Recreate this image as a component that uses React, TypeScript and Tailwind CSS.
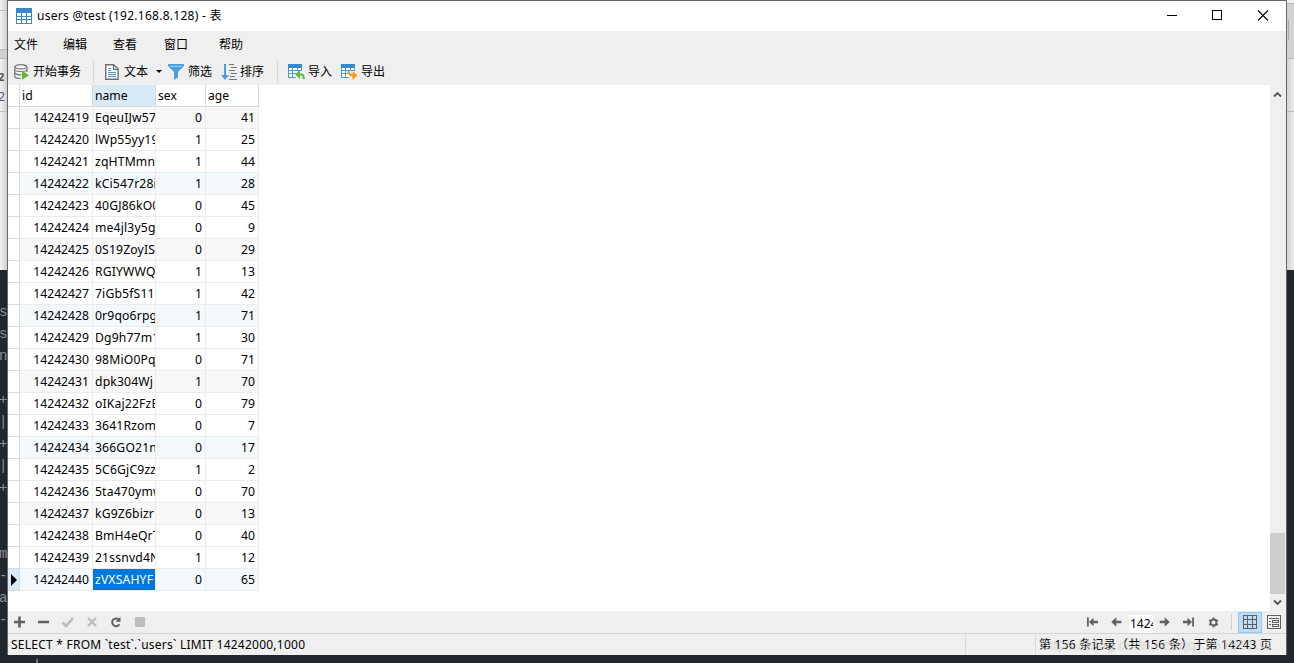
import { useState } from 'react';
import type { ReactNode } from 'react';
import clsx from 'clsx';

interface UserRow {
  id: number;
  name: string;
  sex: number;
  age: number;
}

const FIRST_ID = 14242419;

const records: [string, number, number][] = [
  ['EqeuIJw57', 0, 41],
  ['lWp55yy19', 1, 25],
  ['zqHTMmn', 1, 44],
  ['kCi547r28i', 1, 28],
  ['40GJ86kO0', 0, 45],
  ['me4jl3y5gT', 0, 9],
  ['0S19ZoyIS', 0, 29],
  ['RGIYWWQ', 1, 13],
  ['7iGb5fS11e', 1, 42],
  ['0r9qo6rpg', 1, 71],
  ['Dg9h77m1', 1, 30],
  ['98MiO0Pq', 0, 71],
  ['dpk304Wj', 1, 70],
  ['oIKaj22FzE', 0, 79],
  ['3641Rzom', 0, 7],
  ['366GO21n', 0, 17],
  ['5C6GjC9zz', 1, 2],
  ['5ta470ymw', 0, 70],
  ['kG9Z6bizr', 0, 13],
  ['BmH4eQrT', 0, 40],
  ['21ssnvd4N', 1, 12],
  ['zVXSAHYF', 0, 65],
];

const rows: UserRow[] = records.map(([name, sex, age], i) => ({ id: FIRST_ID + i, name, sex, age }));

const menus = ['文件', '编辑', '查看', '窗口', '帮助'];

// Terminal window showing from behind, one entry per line
const terminalLines = ['s', 's', 'n', '', '+', '|', '+', '|', '+', '', '', 'm', '-', 'a', '-'];

function TableIcon({ children }: { children?: ReactNode }) {
  return (
    <svg width="16" height="16" viewBox="0 0 16 16" shapeRendering="crispEdges">
      <rect x="0" y="0" width="16" height="16" fill="#3b88c6" />
      <path d="M1 5h4v3H1zM6 5h4v3H6zM11 5h4v3h-4zM1 9h4v2H1zM6 9h4v2H6zM11 9h4v2h-4zM1 12h4v3H1zM6 12h4v3H6zM11 12h4v3h-4z" fill="#fff" />
      {children}
    </svg>
  );
}

function TransferIcon({ type }: { type: 'import' | 'export' }) {
  return (
    <svg width="17" height="16" viewBox="0 0 17 16">
      <g shapeRendering="crispEdges">
        <path d="M0 0h14v4H0z" fill="#3b88c6" />
        <path d="M0 4h14v3H8v7H0z" fill="#4d9bd6" />
        <path d="M1 4h3v2H1zM5 4h4v2H5zM10 4h3v2h-3zM1 7h3v2H1zM5 7h4v2H5zM1 10h3v3H1zM5 10h3v3H5z" fill="#fff" />
      </g>
      {type === 'import' ? (
        <>
          <path d="M7 10.5l5-4.5v9z" fill="#62bb35" />
          <path d="M11 10.5h2.5q2.2 0 2.2 4.5" fill="none" stroke="#62bb35" strokeWidth="2.2" />
        </>
      ) : (
        <>
          <path d="M16.5 11.5l-5-4.5v9z" fill="#f79a1c" />
          <path d="M7.5 7q0 4.5 5 4.5" fill="none" stroke="#f79a1c" strokeWidth="2.2" />
        </>
      )}
    </svg>
  );
}

function TransactionIcon() {
  return (
    <svg width="16" height="16" viewBox="0 0 16 16" fill="none">
      <path d="M.8 3v9.5c0 1.2 2.5 2 6 2" stroke="#777" strokeWidth="1.2" />
      <path d="M12.9 3v5" stroke="#777" strokeWidth="1.2" />
      <ellipse cx="6.8" cy="2.8" rx="6" ry="2.1" fill="#f8f8f8" stroke="#777" strokeWidth="1.2" />
      <path d="M.8 6c1.5 2 10.5 2 12.1 0M.8 9.2c1.2 1.5 4 1.8 6.5 1.6" stroke="#777" strokeWidth="1.2" />
      <path d="M8 6.5l7 4.7-7 4.6z" fill="#62bb35" />
    </svg>
  );
}

function TextIcon() {
  return (
    <svg width="14" height="16" viewBox="0 0 14 16" fill="none">
      <path d="M.7.7h8l4.4 4.4v10.2H.7z" fill="#fbfbfb" stroke="#707070" strokeWidth="1.4" />
      <path d="M8.5.7v4.7h4.6" stroke="#707070" strokeWidth="1.2" />
      <path d="M3 4.500h3M3 6.500h3M3 8.500h8M3 10.500h8M3 12.500h8" stroke="#4d9bd6" shapeRendering="crispEdges" />
    </svg>
  );
}

function FilterIcon() {
  return (
    <svg width="16" height="16" viewBox="0 0 16 16">
      <path d="M0 0h16v2l-6 6v5.5L6 16V8L0 2z" fill="#4a9fe0" />
      <path d="M2 2.3h12" stroke="#9fd0f5" strokeWidth="1" />
    </svg>
  );
}

function SortIcon() {
  return (
    <svg width="17" height="16" viewBox="0 0 17 16">
      <path d="M3 0h2v11h3l-4 5-4-5h3z" fill="#4a9fe0" />
      <path d="M8 .5h5M10 3.500h6M8 6.500h6M10 9.500h6M9 12.500h5M8 15.500h8" stroke="#777" shapeRendering="crispEdges" />
    </svg>
  );
}

function ArrowIcon({ flip, bar }: { flip?: boolean; bar?: boolean }) {
  return (
    <svg width="11" height="10" viewBox="0 0 11 10" className={flip ? '-scale-x-100' : undefined}>
      {bar ? (
        <path d="M0 .5h1.800v9H0zM2 5l4.500-4.300v3H11v2.600H6.500v3z" fill="#606060" />
      ) : (
        <path d="M.3 5L5.300.3v3.400H10.300v2.600h-5v3.400z" fill="#606060" />
      )}
    </svg>
  );
}

function Chevron({ down }: { down?: boolean }) {
  return (
    <svg width="9" height="7" viewBox="0 0 9 7" className={down ? 'rotate-180' : undefined}>
      <path d="M1 5.5L4.5 2 8 5.5" fill="none" stroke="#555" strokeWidth="1.9" />
    </svg>
  );
}

function TitleBar() {
  return (
    <div className="flex h-[31px] shrink-0 items-center border-t border-[#666] bg-white pl-2">
      <TableIcon />
      <span className="ml-[5px] text-[12px] tracking-[0.27px]">users @test (192.168.8.128) - 表</span>
      <svg className="ml-auto" width="120" height="30" viewBox="0 0 120 30" fill="none" stroke="#000">
        <path d="M1 14.5h10M46.500 9.500h9v9h-9z" shapeRendering="crispEdges" />
        <path d="M92 9.500l10 10M102 9.500l-10 10" strokeWidth="1.100" />
      </svg>
    </div>
  );
}

function Toolbar() {
  return (
    <div className="flex h-[27px] shrink-0 items-center pl-[6px] text-[12px] leading-4">
      <TransactionIcon />
      <span className="ml-[3px] w-[49px]">开始事务</span>
      <i className="ml-[11px] h-[23px] w-px bg-[#d8d8d8]" />
      <span className="ml-[11px]"><TextIcon /></span>
      <span className="ml-[5px] w-[24px]">文本</span>
      <i className="ml-[8px] border-x-[3px] border-t-[3px] border-x-transparent border-t-black" />
      <span className="ml-[6px]"><FilterIcon /></span>
      <span className="ml-[4px] w-[24px]">筛选</span>
      <span className="ml-[9px]"><SortIcon /></span>
      <span className="ml-[2px] w-[24px]">排序</span>
      <i className="ml-[13px] h-[23px] w-px bg-[#d8d8d8]" />
      <span className="ml-[10px]"><TransferIcon type="import" /></span>
      <span className="ml-[3px] w-[24px]">导入</span>
      <span className="ml-[9px]"><TransferIcon type="export" /></span>
      <span className="ml-[3px]">导出</span>
    </div>
  );
}

function DataGrid({ current, onSelect }: { current: number; onSelect: (i: number) => void }) {
  const cols = 'grid w-[251px] grid-cols-[12px_73px_63px_50px_53px] text-[12.2px] leading-[21px]';

  return (
    <div className="min-w-0 flex-1 bg-white">
      <div className={clsx(cols, 'h-[22px]')}>
        {['', 'id', 'name', 'sex', 'age'].map((col, i) => (
          <div
            key={i}
            className={clsx('border-r border-b border-[#dadada] pl-[2px]', col === 'name' && 'bg-[#d8e9f8]')}
          >
            {col}
          </div>
        ))}
      </div>
      {rows.map((row, i) => (
        <div
          key={row.id}
          onClick={() => onSelect(i)}
          className={clsx(cols, 'h-[22px]', i % 6 === 0 && 'bg-[#f8f8f8]', i % 6 === 3 && 'bg-[#f4f9fe]')}
        >
          <div
            className={clsx(
              'flex items-center border-r border-b border-[#dadada] pl-[3px]',
              i === current ? 'bg-[#d8e9f8]' : 'bg-white',
            )}
          >
            {i === current && (
              <i className="border-y-[6px] border-l-[6px] border-y-transparent border-l-black" />
            )}
          </div>
          <div className="border-r border-b border-[#ececec] pr-[3px] text-right">{row.id}</div>
          <div
            className={clsx(
              'overflow-hidden border-r border-b border-[#ececec] pl-[2px] tracking-[0.15px] whitespace-nowrap',
              i === current && 'bg-[#0078d7] bg-clip-padding text-white',
            )}
          >
            {row.name}
          </div>
          <div className="border-r border-b border-[#ececec] pr-[3px] text-right">{row.sex}</div>
          <div className="border-r border-b border-[#ececec] pr-[3px] text-right">{row.age}</div>
        </div>
      ))}
    </div>
  );
}

function ScrollBar() {
  return (
    <div className="flex w-[15px] shrink-0 flex-col items-center bg-[#efefef]">
      <div className="flex h-[18px] items-center"><Chevron /></div>
      <div className="mt-auto h-[61px] w-full bg-[#cdcdcd]" />
      <div className="flex h-[17px] items-center"><Chevron down /></div>
    </div>
  );
}

function NavBar() {
  return (
    <div className="flex h-[22px] shrink-0 items-center pr-[5px] pl-[6px]">
      <svg width="134" height="12" viewBox="0 0 134 12" fill="none">
        <path d="M0 6h11M5.500 .5v11M24 6h11" stroke="#606060" strokeWidth="2.600" />
        <path d="M48.500 6.500l3.500 3.500 7-8" stroke="#bdbdbd" strokeWidth="2.600" />
        <path d="M74 2l8 8M82 2l-8 8" stroke="#bdbdbd" strokeWidth="2.400" />
        <path d="M105 3.700a3.900 3.900 0 1 0 .5 4.500" stroke="#606060" strokeWidth="2" />
        <path d="M106.500 .8v5h-5z" fill="#606060" />
        <path d="M121 1h10v10h-10z" fill="#bdbdbd" />
      </svg>
      <div className="ml-auto flex items-center">
        <ArrowIcon bar />
        <span className="ml-[13px]"><ArrowIcon /></span>
        <div className="mt-[3px] ml-[7px] h-[18px] w-[24px] overflow-hidden bg-white pl-px text-[12px] leading-[18px]">14243</div>
        <span className="ml-[6px]"><ArrowIcon flip /></span>
        <span className="ml-[13px]"><ArrowIcon flip bar /></span>
        <svg className="ml-[14px]" width="11" height="11" viewBox="0 0 11 11" fill="none" stroke="#606060">
          <circle cx="5.500" cy="5.500" r="3" strokeWidth="1.900" />
          <path d="M5.500 0.500v2M5.500 8.500v2M1.200 3l1.600 1M8.200 7l1.600 1M1.200 8l1.600-1M8.200 4l1.600-1" strokeWidth="1.800" />
        </svg>
        <i className="ml-[12px] h-[16px] w-px bg-[#d0d0d0]" />
        <div className="ml-[6px] flex h-[21px] w-[24px] items-center justify-center border border-[#90c8f6] bg-[#c0dcf3]">
          <svg width="14" height="14" viewBox="0 0 14 14" fill="none" stroke="#606060" shapeRendering="crispEdges">
            <path d="M.5.5h13v13H.5zM4.500 0v14M9.500 0v14M0 4.500h14M0 9.500h14" />
          </svg>
        </div>
        <svg className="ml-[5px]" width="14" height="14" viewBox="0 0 14 14" fill="none" stroke="#606060" shapeRendering="crispEdges">
          <path d="M.5.5h13v13H.5zM2 3.500h10M2 6.500h2M2 9.500h2M5.500 5.500h6v2h-6zM5.500 9.500h6v2h-6z" />
        </svg>
      </div>
    </div>
  );
}

function StatusBar() {
  return (
    <div className="flex h-[22px] shrink-0 border-t border-[#d5d5d5] text-[12px] leading-[21px]">
      <div className="w-[958px] border-r border-[#dadada] pl-[3px] tracking-[0.24px]">
        SELECT * FROM `test`.`users` LIMIT 14242000,1000
      </div>
      <div className="w-[70px] border-r border-[#dadada]" />
      <div className="relative flex-1 pl-[3px] tracking-[0.25px] whitespace-nowrap">
        第 156 条记录（共 156 条）于第 14243 页
        <span className="absolute top-0 left-[5px] font-['Liberation_Sans'] text-[15px] tracking-normal text-white/50 [text-shadow:0_0_1px_#0003]">
          https://blog.csdn.net/qq_25188133
        </span>
      </div>
    </div>
  );
}

export default function App() {
  const [current, setCurrent] = useState(rows.length - 1);

  return (
    <div className="flex h-[663px] w-[1294px] flex-col overflow-hidden bg-[#22262e] font-['Noto_Sans','Noto_Sans_CJK_SC',sans-serif] text-black">
      <div className="flex h-[655px]">
        {/* Windows behind, left side */}
        <div className="flex w-[8px] shrink-0 flex-col overflow-hidden border-r border-[#666]">
          <div className="h-[270px] shrink-0 bg-linear-to-r from-[#f3f3f3] to-[#cfcfcf] text-[11px] text-[#555]">
            <div className="h-[11px] border-b border-[#b8b8b8]" />
            <div className="h-[39px] border-b border-[#b8b8b8]" />
            <div className="h-[9px] border-b border-[#b8b8b8] bg-[#d0d0d0]" />
            <div className="h-[53px] border-b border-[#c0c0c0] pt-[8px] leading-[20px]">
              <div className="-ml-[2px] font-bold">2</div>
              <div className="-ml-[2px] text-[12px] text-[#557]">2</div>
            </div>
          </div>
          <div className="flex-1 pt-[31px] font-['Liberation_Mono'] text-[14px] leading-[22px] text-[#8b8f97]">
            {terminalLines.map((line, i) => (
              <div key={i} className="-ml-px h-[22px]">{line}</div>
            ))}
          </div>
        </div>

        <div className="flex min-w-0 flex-1 flex-col bg-[#efefef]">
          <TitleBar />
          <div className="flex h-[27px] shrink-0 items-center pl-[6px] text-[12px]">
            {menus.map((menu, i) => (
              <span key={menu} className={clsx('h-[18px] leading-[18px]', i === 3 ? 'w-[55px]' : i === 2 ? 'w-[51px]' : i === 1 ? 'w-[50px]' : 'w-[49px]')}>
                {menu}
              </span>
            ))}
          </div>
          <Toolbar />
          <div className="flex h-[526px] shrink-0 pr-px">
            <DataGrid current={current} onSelect={setCurrent} />
            <ScrollBar />
          </div>
          <NavBar />
          <StatusBar />
        </div>

        {/* Right side */}
        <div className="w-[8px] shrink-0 border-l border-[#666]">
          <div className="h-[270px] bg-linear-to-r from-[#d4d4d4] to-[#ededed]">
            <div className="h-[4px] border-b border-[#b8b8b8] bg-[#f2f2f2]" />
            <div className="h-[55px] border-b border-[#b8b8b8] bg-[#d2d2d2] pt-[15px]">
              <div className="h-[22px] w-[2px] rounded-r-full border-r border-[#aaa]" />
            </div>
            <div className="h-[53px] border-b border-[#b8b8b8]" />
          </div>
        </div>
      </div>
      <div className="h-[8px] overflow-hidden pt-[4px] pl-[36px]">
        <div className="h-[4px] w-[2px] bg-[#70757d]" />
      </div>
    </div>
  );
}
